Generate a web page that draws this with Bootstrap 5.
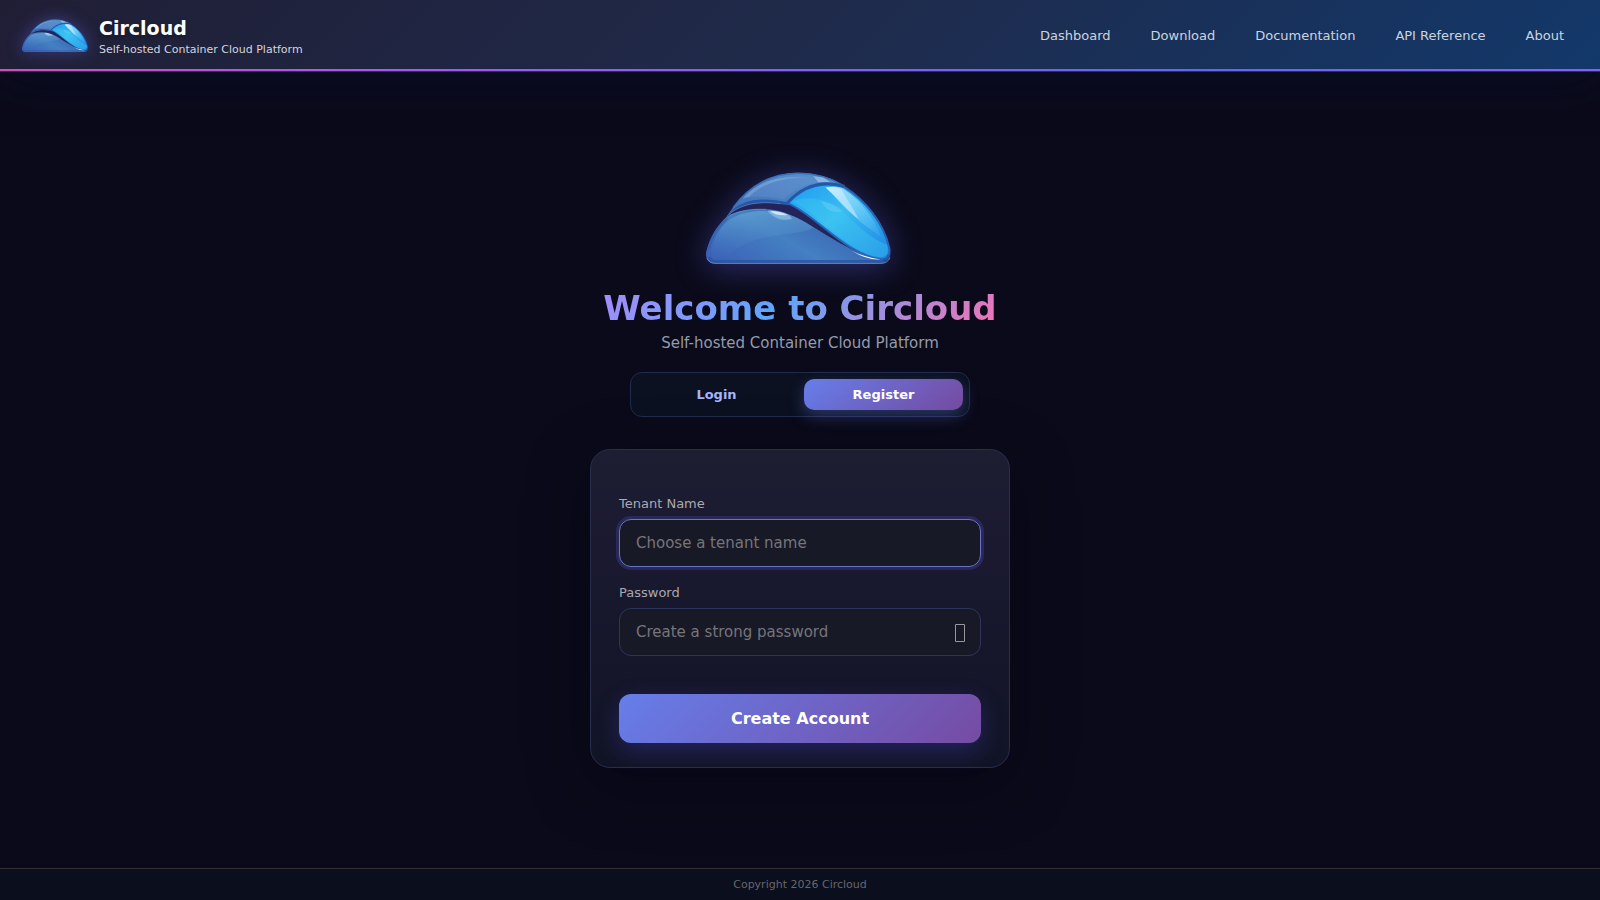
<!DOCTYPE html>
<html lang="en">
<head>
<meta charset="utf-8">
<meta name="viewport" content="width=device-width, initial-scale=1">
<title>Circloud</title>
<link href="https://cdn.jsdelivr.net/npm/bootstrap@5.3.0/dist/css/bootstrap.min.css" rel="stylesheet">
<style>
  body { font-family: "DejaVu Sans", sans-serif; background: #0a0a1a; color: #fff; }
  .site-header {
    height: 72px; position: relative; z-index: 1;
    background: linear-gradient(135deg, #201e35 0%, #1f2a4a 50%, #12386a 100%);
    border-bottom: 1px solid #2b3150;
    box-shadow: 0 8px 48px rgba(9, 14, 38, .6);
  }
  .site-header::after {
    content: ""; position: absolute; left: 0; right: 0; bottom: 0; height: 2px;
    background: linear-gradient(90deg, #cf4fbd 0%, #a855f7 25%, #6366f1 75%, #8b5cf6 100%);
  }
  .brand-link { gap: 11px; padding-left: 22px; }
  .logo-glow { filter: drop-shadow(0 0 8px rgba(99, 102, 241, .4)); }
  .hero-glow { filter: drop-shadow(0 4px 16px rgba(99, 102, 241, .4)); }
  .brand-title { font-size: 19px; line-height: 28px; text-shadow: 0 2px 4px rgba(0, 0, 0, .3); }
  .brand-sub { font-size: 11px; line-height: 16px; color: #d3d5de; }
  .site-nav { gap: 40px; padding-right: 36px; }
  .site-nav .nav-link { font-size: 13px; line-height: 20px; color: #cdd3df; padding: 0; }
  .hero-title {
    font-size: 34px; line-height: 40px;
    background: linear-gradient(135deg, #a78bfa 0%, #60a5fa 45%, #f472b6 100%);
    -webkit-background-clip: text; background-clip: text; color: transparent;
  }
  .hero-sub { font-size: 15px; line-height: 22px; color: #949bab; }
  .auth-tabs {
    width: 340px; max-width: 100%; padding: 6px; margin-top: 18px;
    border: 1px solid #232b4c; border-radius: 12px; background: #0b1120;
  }
  .auth-tabs .btn { font-size: 13px; line-height: 15px; padding: 8px; border: 0; border-radius: 10px; color: #a5b4fc; }
  .auth-tabs .btn.active { background: linear-gradient(135deg, #667eea, #764ba2); color: #fff; box-shadow: 0 6px 16px rgba(102, 126, 234, .35); }
  .auth-card {
    width: 420px; max-width: 100%; margin-top: 32px; border: 1px solid #2a2c50; border-radius: 20px; padding: 44px 28px 24px;
    background: linear-gradient(180deg, #1d1e32 0%, #1a1930 30%, #111425 100%);
    box-shadow: 0 16px 64px rgba(2, 2, 14, .4);
  }
  .auth-card .form-label { font-size: 13px; line-height: 19px; color: #aaa9b0; margin-bottom: 6px; }
  .auth-card .form-control {
    height: 48px; font-size: 15px; padding: 0 16px; border: 1px solid #2f345a; border-radius: 12px;
    background: #181926; color: #fff;
  }
  .auth-card .form-control::placeholder { color: #75757a; }
  .auth-card .form-control:focus { border-color: #6873c4; box-shadow: 0 0 0 3px #28285a; }
  .reveal { position: absolute; right: 16px; top: 0; bottom: 0; padding: 2px 0 0; border: 0; background: none; line-height: 0; }
  .create-btn {
    font-size: 16px; line-height: 25px; padding: 12px; border: 0; border-radius: 12px; color: #fff; margin-top: 38px;
    background: linear-gradient(135deg, #667eea, #764ba2); box-shadow: 0 8px 24px rgba(79, 70, 229, .3);
  }
  .create-btn:hover { color: #fff; }
  .site-footer { font-size: 11px; line-height: 31px; color: #66676c; background: #0b0e1d; border-top: 1px solid #303032; }
</style>
</head>
<body class="d-flex flex-column min-vh-100">
<svg width="0" height="0" class="position-absolute" aria-hidden="true">
  <defs>
    <linearGradient id="gBack" x1="0" y1="1" x2="1" y2="0"><stop offset="0" stop-color="#3b6cb8"/><stop offset=".5" stop-color="#4a80c4"/><stop offset="1" stop-color="#5598d0"/></linearGradient>
    <linearGradient id="gFront" x1="0" y1=".8" x2="1" y2=".3"><stop offset="0" stop-color="#3c62b8"/><stop offset=".45" stop-color="#4480c2"/><stop offset="1" stop-color="#3457aa"/></linearGradient>
    <linearGradient id="gTop" x1="0" y1="0" x2="0" y2="1"><stop offset="0" stop-color="#68a9d8" stop-opacity=".65"/><stop offset="1" stop-color="#4480c4" stop-opacity="0"/></linearGradient>
    <linearGradient id="gWing" x1="0" y1="0" x2="1" y2="1"><stop offset="0" stop-color="#1e9cf0"/><stop offset=".45" stop-color="#38bdf2"/><stop offset="1" stop-color="#1c82e4"/></linearGradient>
    <linearGradient id="gShine" x1="0" y1="0" x2="1" y2="1"><stop offset="0" stop-color="#d2f0ff" stop-opacity=".9"/><stop offset="1" stop-color="#5cc8f8" stop-opacity=".15"/></linearGradient>
    <symbol id="dome" viewBox="79 71 554 274">
      <path d="M141 204C190 127 264 72 354 72C488 72 596 167 631 299C638 329 622 344 603 344H105C84 344 75 326 81 304C92 263 112 232 141 204Z" fill="#25245a"/>
      <path d="M141 204C190 127 264 73 354 73C408 73 455 86 496 115C430 103 375 119 326 168C270 159 190 152 141 204Z" fill="url(#gBack)"/>
      <path d="M160 177C207 113 273 75 354 74C405 74 450 86 494 113" fill="none" stroke="#3a70b8" stroke-width="4"/>
      <path d="M188 150C246 89 330 72 401 87L446 101C375 98 342 128 311 151C270 145 220 141 188 150Z" fill="#6b91cd" opacity=".4"/>
      <path d="M190 147C238 96 300 80 374 88C302 86 243 108 207 145Z" fill="#9cc3e8" opacity=".35"/>
      <path d="M400 83L430 87L452 101H416Z" fill="#b6cfea" opacity=".6"/>
      <path d="M141 204C182 144 255 147 324 161V170C270 159 190 154 141 204Z" fill="#2558a6"/>
      <path d="M141 204C180 165 235 157 302 165" fill="none" stroke="#9fb4da" stroke-width="1"/>
      <path d="M324 164C374 109 435 98 492 115C559 157 609 223 627 294C633 322 622 335 598 331C495 315 405 196 324 164Z" fill="url(#gWing)" stroke="#2864b4" stroke-width="6"/>
      <path d="M322 163C374 106 435 96 494 113" fill="none" stroke="#2557a6" stroke-width="8"/>
      <path d="M335 158C384 137 448 153 487 188C535 232 567 267 621 289C629 319 614 328 594 325C501 310 425 200 335 158Z" fill="#42cdf2" opacity=".35"/>
      <path d="M437 117C457 112 481 115 491 121C545 158 583 207 604 266C578 245 547 228 520 199C492 171 463 139 437 117Z" fill="url(#gShine)"/>
      <path d="M437 117C461 112 479 117 485 124C500 150 520 180 536 210C500 190 466 142 437 117Z" fill="#e0f5ff" opacity=".45"/>
      <path d="M423 157C449 162 473 171 488 188C464 195 439 188 423 157Z" fill="#8bd8f2" opacity=".3"/>
      <path d="M81 304C92 263 112 232 141 204C172 186 210 180 252 181C370 182 458 300 603 334C620 337 617 344 603 344H105C84 344 75 326 81 304Z" fill="url(#gFront)"/>
      <path d="M97 297C108 258 124 233 151 212C180 194 215 187 252 187C328 188 374 216 400 237C351 267 197 245 139 333H105C93 330 90 318 97 297Z" fill="url(#gTop)"/>
      <path d="M85 305C96 263 115 234 143 208" fill="none" stroke="#2c5cab" stroke-width="7" opacity=".5"/>
      <path d="M88 324Q93 338 107 338H605Q623 338 626 319" fill="none" stroke="#2855a2" stroke-width="9" opacity=".8"/>
      <path d="M150 200C184 184 220 180 260 182" fill="none" stroke="#8cc6e9" stroke-width="1"/>
      <path d="M263 186C298 184 334 196 336 211C306 218 279 207 263 186Z" fill="#8fc0e6" opacity=".7"/>
      <path d="M270 186Q301 187 323 199Q290 203 270 186Z" fill="#e4f2fb" opacity=".8"/>
      <path d="M515 306Q550 324 602 332Q563 335 515 306Z" fill="#fff"/>
      <path d="M82 329Q88 343 105 344H603Q624 344 630 326" fill="none" stroke="#7f9bcb" stroke-width="2"/>
    </symbol>
  </defs>
</svg>

<header class="site-header d-flex align-items-center justify-content-between">
  <a href="#" class="brand-link d-flex align-items-center text-decoration-none text-white">
    <svg class="logo-glow" width="66" height="33" aria-hidden="true"><use href="#dome"/></svg>
    <span class="d-flex flex-column">
      <span class="brand-title fw-bold">Circloud</span>
      <span class="brand-sub">Self-hosted Container Cloud Platform</span>
    </span>
  </a>
  <nav class="site-nav nav">
    <a class="nav-link" href="#">Dashboard</a>
    <a class="nav-link" href="#">Download</a>
    <a class="nav-link" href="#">Documentation</a>
    <a class="nav-link" href="#">API Reference</a>
    <a class="nav-link" href="#">About</a>
  </nav>
</header>

<main class="flex-grow-1 d-flex flex-column align-items-center justify-content-center px-3">
  <svg class="hero-glow me-1" width="185" height="92" aria-hidden="true"><use href="#dome"/></svg>
  <h1 class="hero-title fw-bold mt-4 mb-1">Welcome to Circloud</h1>
  <p class="hero-sub mb-0">Self-hosted Container Cloud Platform</p>
  <div class="auth-tabs d-flex gap-2" role="group" aria-label="Account">
    <button type="button" class="btn fw-bold flex-fill w-50">Login</button>
    <button type="button" class="btn fw-bold flex-fill w-50 active">Register</button>
  </div>
  <form class="auth-card">
    <div class="mb-3">
      <label class="form-label d-block" for="tenant">Tenant Name</label>
      <input class="form-control" id="tenant" type="text" placeholder="Choose a tenant name" autofocus>
    </div>
    <label class="form-label d-block" for="password">Password</label>
    <div class="position-relative">
      <input class="form-control" id="password" type="password" placeholder="Create a strong password">
      <button type="button" class="reveal" aria-label="Show password">
        <svg width="10" height="18" viewBox="0 0 10 18"><path d="M.5 .5H9.5V17.5H.5Z" fill="none" stroke="#96969b"/></svg>
      </button>
    </div>
    <button type="submit" class="btn create-btn fw-bold w-100">Create Account</button>
  </form>
</main>

<footer class="site-footer text-center">Copyright 2026 Circloud</footer>
<script src="https://cdn.jsdelivr.net/npm/bootstrap@5.3.0/dist/js/bootstrap.bundle.min.js"></script>
</body>
</html>
